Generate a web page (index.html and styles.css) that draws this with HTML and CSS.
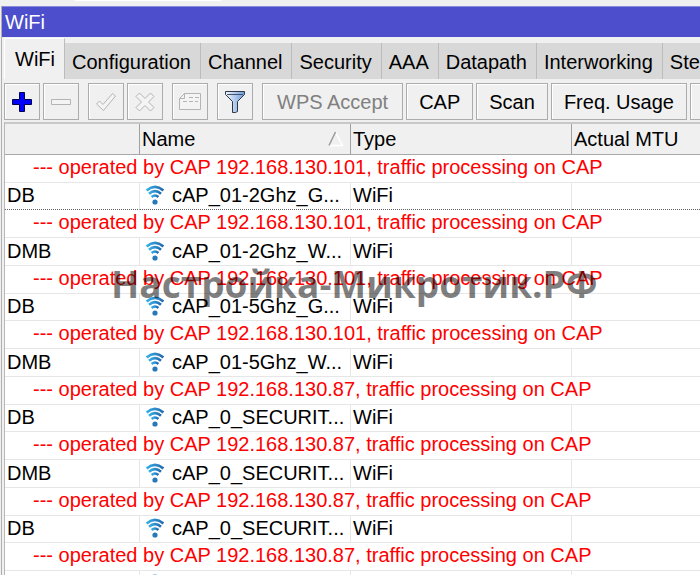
FILE: index.html
```html
<!DOCTYPE html>
<html lang="en">
<head>
    <meta charset="UTF-8">
    <meta name="viewport" content="width=device-width, initial-scale=1.0">
    <title>WiFi</title>
    <link rel="stylesheet" href="styles.css">
</head>
<body>
    <svg class="defs" width="0" height="0" aria-hidden="true">
        <defs>
            <linearGradient id="wave" x1="0" y1="0" x2="1" y2="0">
                <stop offset="0" stop-color="#35b0e8"/>
                <stop offset="1" stop-color="#2468ae"/>
            </linearGradient>
            <linearGradient id="steel" x1="0" y1="0" x2="1" y2="0">
                <stop offset="0" stop-color="#f4f9ff"/>
                <stop offset="1" stop-color="#6f9bd8"/>
            </linearGradient>
            <symbol id="wifi" viewBox="0 0 18 20">
                <g fill="none" stroke="url(#wave)" stroke-width="2.6">
                    <path d="M0.6 5.4Q9 -1.6 17.4 5.4"/>
                    <path d="M3 8.8Q9 3.6 15 8.8"/>
                    <path d="M5.6 12Q9 9 12.4 12"/>
                </g>
                <circle cx="9" cy="17" r="2.6" fill="#2878b8"/>
            </symbol>
        </defs>
    </svg>

    <div class="top-strip"><div class="top-field"></div></div>
    <div class="window">
        <div class="titlebar">WiFi</div>

        <nav class="tabs">
            <a class="tab active" href="#wifi">WiFi</a>
            <a class="tab" href="#configuration">Configuration</a>
            <a class="tab" href="#channel">Channel</a>
            <a class="tab" href="#security">Security</a>
            <a class="tab" href="#aaa">AAA</a>
            <a class="tab" href="#datapath">Datapath</a>
            <a class="tab" href="#interworking">Interworking</a>
            <a class="tab" href="#steering">Steering</a>
        </nav>

        <div class="toolbar">
            <div class="group">
                <button class="button icon" aria-label="Add">
                    <svg width="22" height="22" viewBox="0 0 22 22"><path d="M8.5 1.5h5v7h7v5h-7v7h-5v-7h-7v-5h7z" fill="#0000ff" stroke="#000050"/></svg>
                </button>
                <button class="button icon" aria-label="Remove" disabled>
                    <svg width="22" height="22" viewBox="0 0 22 22"><path d="M1.500 8.500h19v5h-19z" fill="#f4f4f4" stroke="#b4b4b4"/></svg>
                </button>
            </div>
            <div class="group">
                <button class="button icon" aria-label="Enable" disabled>
                    <svg width="22" height="22" viewBox="0 0 22 22"><path d="M1.500 13L4.500 10L8 13.500L17.500 2.500L20.500 5L8.500 19.500z" fill="#f4f4f4" stroke="#b4b4b4"/></svg>
                </button>
                <button class="button icon" aria-label="Disable" disabled>
                    <svg width="22" height="22" viewBox="0 0 22 22"><path d="M5.500 2L11 7.500L16.500 2L20 5.500L14.500 11L20 16.500L16.500 20L11 14.500L5.500 20L2 16.500L7.500 11L2 5.500z" fill="#f4f4f4" stroke="#b4b4b4"/></svg>
                </button>
            </div>
            <div class="group">
                <button class="button icon" aria-label="Comment" disabled>
                    <svg width="24" height="22" viewBox="0 0 24 22" fill="none" stroke="#b4b4b4"><path d="M6.500 2.500h16v16h-21v-11z" fill="#f4f4f4"/><path d="M6.500 2.500v5h-5M11 6.500h4m2 0h4M5 10.500h4m2 0h4m2 0h3"/></svg>
                </button>
            </div>
            <div class="group">
                <button class="button icon" aria-label="Filter">
                    <svg width="22" height="24" viewBox="0 0 22 24"><path d="M1.500 1.500h19v3l-7 7v10l-2 1h-3v-11l-7-7z" fill="url(#steel)" stroke="#303848"/><path d="M3 4.500h16" stroke="#43536b"/></svg>
                </button>
            </div>
            <div class="group">
                <button class="button wide" disabled>WPS Accept</button>
                <button class="button">CAP</button>
                <button class="button">Scan</button>
                <button class="button">Freq. Usage</button>
                <button class="button">Align</button>
            </div>
        </div>

        <table class="list">
            <colgroup>
                <col class="col-flags">
                <col class="col-name">
                <col class="col-type">
                <col>
            </colgroup>
            <thead>
                <tr>
                    <th></th>
                    <th>
                        <div class="sorted">Name
                            <svg width="16" height="16" viewBox="0 0 16 16" fill="none"><path d="M1 14.500H14.500L7.500 1" stroke="#fff" stroke-width="1.500"/><path d="M1 14.500L7.500 1" stroke="#999" stroke-width="1.500"/></svg>
                        </div>
                    </th>
                    <th>Type</th>
                    <th>Actual MTU</th>
                </tr>
            </thead>
            <tbody>
                <tr class="comment"><td colspan="4">--- operated by CAP 192.168.130.101, traffic processing on CAP</td></tr>
                <tr class="focused"><td>DB</td><td><svg class="wifi"><use href="#wifi"/></svg>cAP_01-2Ghz_G...</td><td>WiFi</td><td></td></tr>
            </tbody>
            <tbody>
                <tr class="comment"><td colspan="4">--- operated by CAP 192.168.130.101, traffic processing on CAP</td></tr>
                <tr><td>DMB</td><td><svg class="wifi"><use href="#wifi"/></svg>cAP_01-2Ghz_W...</td><td>WiFi</td><td></td></tr>
            </tbody>
            <tbody>
                <tr class="comment"><td colspan="4">--- operated by CAP 192.168.130.101, traffic processing on CAP</td></tr>
                <tr><td>DB</td><td><svg class="wifi"><use href="#wifi"/></svg>cAP_01-5Ghz_G...</td><td>WiFi</td><td></td></tr>
            </tbody>
            <tbody>
                <tr class="comment"><td colspan="4">--- operated by CAP 192.168.130.101, traffic processing on CAP</td></tr>
                <tr><td>DMB</td><td><svg class="wifi"><use href="#wifi"/></svg>cAP_01-5Ghz_W...</td><td>WiFi</td><td></td></tr>
            </tbody>
            <tbody>
                <tr class="comment"><td colspan="4">--- operated by CAP 192.168.130.87, traffic processing on CAP</td></tr>
                <tr><td>DB</td><td><svg class="wifi"><use href="#wifi"/></svg>cAP_0_SECURIT...</td><td>WiFi</td><td></td></tr>
            </tbody>
            <tbody>
                <tr class="comment"><td colspan="4">--- operated by CAP 192.168.130.87, traffic processing on CAP</td></tr>
                <tr><td>DMB</td><td><svg class="wifi"><use href="#wifi"/></svg>cAP_0_SECURIT...</td><td>WiFi</td><td></td></tr>
            </tbody>
            <tbody>
                <tr class="comment"><td colspan="4">--- operated by CAP 192.168.130.87, traffic processing on CAP</td></tr>
                <tr><td>DB</td><td><svg class="wifi"><use href="#wifi"/></svg>cAP_0_SECURIT...</td><td>WiFi</td><td></td></tr>
            </tbody>
            <tbody>
                <tr class="comment"><td colspan="4">--- operated by CAP 192.168.130.87, traffic processing on CAP</td></tr>
                <tr><td></td><td><svg class="wifi"><use href="#wifi"/></svg></td><td></td><td></td></tr>
            </tbody>
        </table>
    </div>
    <div class="watermark">Настройка-Микротик.РФ</div>
</body>
</html>
```
FILE: styles.css
```css
* {
    box-sizing: border-box;
}
body {
    margin: 0;
    height: 100vh;
    overflow: hidden;
    position: relative;
    background-color: #f0f0f0;
    font-family: "Liberation Sans", Arial, sans-serif;
    font-size: 20px;
    line-height: 24px;
    color: #000;
}
.defs {
    position: absolute;
}
.top-strip {
    height: 6px;
    padding-left: 75px;
}
.top-field {
    width: 146px;
    height: 1px;
    background: #fff;
}
.window {
    margin-left: 1px;
    border-left: 1px solid #b0b0b0;
}
.titlebar {
    height: 31px;
    padding: 3px;
    background-color: #4d4ecb;
    border-top: 1px solid #8a8bdc;
    color: #fff;
}

/* tabs */
.tabs {
    display: flex;
    align-items: flex-end;
    height: 42px;
    padding-left: 2px;
    overflow: hidden;
}
.tab {
    flex: none;
    height: 36px;
    padding: 7px 9px 5px 7px;
    background-color: #d8d8d8;
    border-right: 1px solid #bcbcbc;
    color: #000;
    text-decoration: none;
}
.tab.active {
    height: 41px;
    padding: 8px 9px 8px 10px;
    background-color: #f0f0f0;
    border-top: 1px solid #fff;
    border-left: 1px solid #fff;
}

/* toolbar */
.toolbar {
    display: flex;
    gap: 9px;
    padding: 4px 0 2px 2px;
    overflow: hidden;
}
.group {
    display: flex;
    gap: 3px;
}
.button {
    flex: none;
    height: 37px;
    padding: 0 12px;
    background-color: #f0f0f0;
    border: 1px solid #acacac;
    box-shadow: inset 1px 1px 0 #fff;
    color: #000;
    font: inherit;
}
.button.wide {
    padding: 0 14px;
}
.button.icon {
    display: flex;
    align-items: center;
    justify-content: center;
    width: 36px;
    padding: 0;
}
.button:disabled {
    color: #808080;
}

/* interface list */
.list {
    width: calc(100% - 2px);
    margin-left: 2px;
    table-layout: fixed;
    border-collapse: separate;
    border-spacing: 0;
    border-top: 2px solid #c8c8c8;
    border-left: 1px solid #b8b8b8;
    background-color: #fff;
}
.col-flags {
    width: 135px;
}
.col-name {
    width: 211px;
}
.col-type {
    width: 221px;
}
.list th {
    height: 31px;
    padding: 0 2px;
    background-color: #f0f0f0;
    border-right: 1px solid #a0a0a0;
    border-bottom: 1px solid #a8a8a8;
    font-weight: normal;
    text-align: left;
}
.list td {
    height: 27px;
    padding: 0 2px 2px;
    border-right: 1px solid #e6e6e6;
    border-bottom: 1px solid #e6e6e6;
    white-space: nowrap;
    overflow: hidden;
}
.list th:last-child,
.list td:last-child {
    border-right: none;
}
.list .comment td,
.list tbody:nth-of-type(even) td {
    height: 28px;
}
.list .comment td {
    padding-bottom: 3px;
    padding-left: 28px;
    color: #f00;
}
.list .focused td {
    border-bottom: 1px dotted #606060;
}
.sorted {
    display: flex;
    align-items: center;
    justify-content: space-between;
    padding-right: 4px;
}
.wifi {
    width: 18px;
    height: 20px;
    margin: 0 8px 0 4px;
    vertical-align: -3px;
}

.watermark {
    position: absolute;
    top: 259px;
    left: 111px;
    font-family: "Open Sans", "Noto Sans", sans-serif;
    font-size: 37px;
    font-weight: bold;
    line-height: 50px;
    white-space: nowrap;
    color: rgba(0, 0, 0, 0.5);
    pointer-events: none;
}
```
